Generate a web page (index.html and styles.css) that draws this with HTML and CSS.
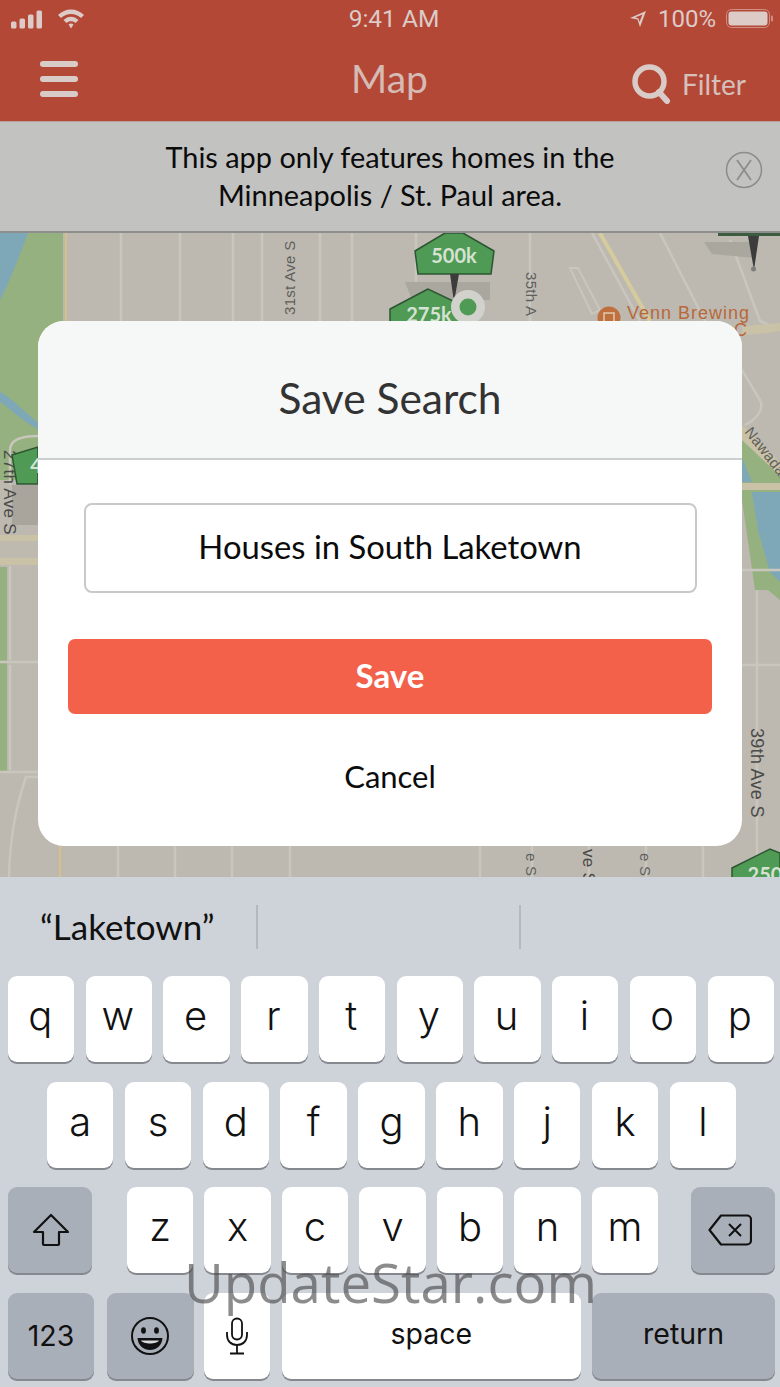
FILE: index.html
```html
<!DOCTYPE html>
<html lang="en">
<head>
    <meta charset="UTF-8">
    <meta name="viewport" content="width=device-width, initial-scale=1.0">
    <title>Save Search</title>
    <link rel="stylesheet" href="styles.css">
</head>
<body>
    <div class="app">
        <header class="topbar">
            <div class="status">
                <div class="status-left">
                    <svg width="74" height="26" viewBox="0 0 74 26">
                        <rect x="0" y="15.500" width="5.500" height="7" rx="1.500" fill="#dccbc7"/>
                        <rect x="8.500" y="12.500" width="5.500" height="10" rx="1.500" fill="#dccbc7"/>
                        <rect x="17" y="8.500" width="5.500" height="14" rx="1.500" fill="#dccbc7"/>
                        <rect x="25.500" y="4.500" width="5.500" height="18" rx="1.500" fill="#dccbc7"/>
                        <path d="M47 9 C54 1.500 66 1.500 73 9 L70 12 C64 6.500 56 6.500 50 12 Z M52.500 14 C57 9.500 63 9.500 67.500 14 L64.500 17 C62 14.500 58 14.500 55.500 17 Z M57.500 18.500 C59 17 61 17 62.500 18.500 L60 22.500 Z" fill="#dccbc7"/>
                    </svg>
                </div>
                <div class="status-time">9:41 AM</div>
                <div class="status-right">
                    <svg class="arrow" width="18" height="18" viewBox="0 0 18 18">
                        <path d="M17 1 L1 8 L8.500 9.500 L11 17 Z M13.500 4.500 L10.500 12 L9.500 8.500 L6 7.500 Z" fill="#dccbc7" fill-rule="evenodd"/>
                    </svg>
                    <span>100%</span>
                    <svg width="48" height="22" viewBox="0 0 48 22">
                        <rect x="0.500" y="1.500" width="43" height="18" rx="5" fill="none" stroke="#cf8f83" stroke-width="1"/>
                        <rect x="2.500" y="3.500" width="39" height="14" rx="3" fill="#dccbc7"/>
                        <rect x="45" y="7.500" width="2" height="6" rx="1" fill="#cf8f83"/>
                    </svg>
                </div>
            </div>
            <nav class="navbar">
                <div class="nav-left">
                    <div class="burger"><i></i><i></i><i></i></div>
                </div>
                <div class="nav-title">Map</div>
                <div class="nav-right">
                    <svg width="40" height="40" viewBox="0 0 40 40">
                        <circle cx="17.500" cy="17.500" r="14.500" fill="none" stroke="#d9cbc7" stroke-width="5.500"/>
                        <path d="M27 28 L35 37" stroke="#d9cbc7" stroke-width="6" stroke-linecap="round"/>
                    </svg>
                    <span>Filter</span>
                </div>
            </nav>
        </header>

        <section class="banner">
            <div></div>
            <p>This app only features homes in the<br>Minneapolis / St. Paul area.</p>
            <div class="banner-close">
                <svg width="38" height="38" viewBox="0 0 38 38">
                    <circle cx="19" cy="19" r="17.500" fill="none" stroke="#8c8c8a" stroke-width="1.500"/>
                    <path d="M12 9 L26 29 M26 9 L12 29" stroke="#8c8c8a" stroke-width="1.800"/>
                </svg>
            </div>
        </section>

        <main class="map">
            <svg class="map-art" width="780" height="644" viewBox="0 233 780 644">
                <rect x="0" y="233" width="780" height="644" fill="#bdb9b1"/>

                <!-- parks and water -->
                <path d="M0 233 H63 V400 C50 420 45 450 40 480 H0 Z" fill="#95b17f"/>
                <path d="M0 233 H28 C18 260 8 285 0 300 Z" fill="#7ea8b8"/>
                <path d="M0 392 C12 398 24 412 40 424 L40 430 C22 422 10 408 0 402 Z" fill="#7ea8b8"/>
                <rect x="0" y="567" width="7" height="205" fill="#95b17f"/>
                <path d="M742 430 L780 462 V600 L768 590 L755 590 L742 500 Z" fill="#95b17f"/>
                <path d="M742 458 L752 482 H742 Z M752 492 H780 V582 L770 572 L758 530 Z" fill="#7ea8b8"/>

                <!-- streets -->
                <g stroke="#c9c6be" stroke-width="2.500" fill="none">
                    <path d="M121 233 V321 M180 233 V321 M233 233 V321 M262 233 V321 M320 233 V321 M352 233 V321 M416 233 V300 M530 233 V321"/>
                    <path d="M118 846 V877 M175 846 V877 M232 846 V877 M290 846 V877 M480 846 V877 M532 846 V877 M589 846 V877 M646 846 V877 M703 846 V877"/>
                    <path d="M10 566 V660 M10 665 V770 M0 662 H38 M0 772 H38 M38 777 H26 C18 800 10 830 9 877"/>
                    <path d="M742 570 H780 M742 665 H780 M757 590 V877"/>
                    <path d="M592 233 L640 321 M660 233 L705 321 M730 240 L760 321 L780 330"/>
                    <path d="M10 485 V450 C10 440 20 436 38 436"/>
                    <path d="M742 370 L760 400 C765 410 755 420 745 425"/>
                </g>
                <path d="M600 233 L650 321" stroke="#d5cb9c" stroke-width="4" fill="none"/>
                <path d="M66 233 V321" stroke="#d5c08a" stroke-width="2" fill="none"/>
                <path d="M60 846 V877" stroke="#d5c08a" stroke-width="2" fill="none"/>
                <rect x="0" y="535" width="38" height="30" fill="#c9c2a7"/>
                <rect x="0" y="541" width="38" height="17" fill="#bfbab0"/>
                <rect x="742" y="483" width="38" height="7" fill="#c9c2a7"/>
                <path d="M742 425 L780 462 V476 L742 440 Z" fill="#c9c2a7"/>
                <path d="M742 327 C755 324 765 325 780 323 V331 C765 334 755 333 742 336 Z" fill="#c9c2a7"/>
                <path d="M570 268 L578 268 L600 310 L592 314 Z" fill="none" stroke="#c9c6be" stroke-width="2"/>
                <path d="M704 242 H750 L755 258 L712 254 Z" fill="#aaa79f"/>
                <path d="M405 282 H490 V300 H412 Z" fill="#aaa79f"/>
                <rect x="12" y="485" width="26" height="40" fill="#a9a59d"/>

                <!-- street names -->
                <g class="street" fill="#5f5f5d">
                    <text transform="translate(295 315) rotate(-90)">31st Ave S</text>
                    <text transform="translate(526 272) rotate(90)">35th A</text>
                    <text class="street-dark wide" transform="translate(751 728) rotate(90)">39th Ave S</text>
                    <text class="street-dark" transform="translate(4 450) rotate(90)">27th Ave S</text>
                    <text transform="translate(744 432) rotate(52)">Nawadan</text>
                    <text transform="translate(526 853) rotate(90)">e S</text>
                    <text class="street-dark" transform="translate(583 849) rotate(90)">ve S</text>
                    <text transform="translate(640 853) rotate(90)">e S</text>
                </g>

                <!-- Venn Brewing -->
                <circle cx="609" cy="318" r="11.500" fill="#c0703f"/>
                <rect x="604" y="313" width="10" height="10" fill="none" stroke="#e0c9b0" stroke-width="1.500"/>
                <text class="poi" x="627" y="319">Venn Brewing</text>
                <text class="poi" x="734" y="336">C</text>

                <!-- price pins -->
                <g class="pin">
                    <path d="M445 233 H463 L494 251 L491 274 H418 L415 251 Z" fill="#4f9a55" stroke="#2d5532" stroke-width="1.500"/>
                    <path d="M450 274 H459 L454 302 Z" fill="#3c3c3c"/>
                    <text x="454" y="263">500k</text>

                    <path d="M428 289 L390 309 V330 H470 V309 Z" fill="#4f9a55" stroke="#2d5532" stroke-width="1.500"/>
                    <text x="429" y="322">275k</text>

                    <circle cx="468" cy="307" r="17" fill="#d2d2cc"/>
                    <circle cx="468" cy="307" r="8.500" fill="#4f9a55"/>

                    <path d="M718 233 H780 V236 H718 Z" fill="#3c5c42"/>
                    <path d="M748 236 H759 L754 270 Z" fill="#3c3c3c"/>
                    <circle cx="753.500" cy="269" r="2.500" fill="#7e7e7c"/>

                    <path d="M732 868 L770 849 L780 853 V880 H732 Z" fill="#4f9a55" stroke="#2d5532" stroke-width="1.500"/>
                    <text x="765" y="882">250</text>

                    <path d="M12 455 L38 447 V484 H17 Z" fill="#4f9a55" stroke="#2d5532" stroke-width="1.500"/>
                    <text x="36" y="473">4</text>
                </g>
            </svg>

            <form class="modal">
                <h2 class="modal-title">Save Search</h2>
                <div class="modal-body">
                    <div class="search-name">Houses in South Laketown</div>
                    <button type="button" class="save-btn">Save</button>
                    <button type="button" class="cancel-btn">Cancel</button>
                </div>
            </form>
        </main>

        <section class="keyboard">
            <div class="suggestions">
                <div class="suggestion">“Laketown”</div>
                <div class="suggestion"></div>
                <div class="suggestion"></div>
            </div>
            <div class="key-row row-one">
                <div class="key">q</div><div class="key">w</div><div class="key">e</div><div class="key">r</div><div class="key">t</div><div class="key">y</div><div class="key">u</div><div class="key">i</div><div class="key">o</div><div class="key">p</div>
            </div>
            <div class="key-row row-two">
                <div class="key">a</div><div class="key">s</div><div class="key">d</div><div class="key">f</div><div class="key">g</div><div class="key">h</div><div class="key">j</div><div class="key">k</div><div class="key">l</div>
            </div>
            <div class="key-row row-three">
                <div class="key dark shift">
                    <svg width="38" height="34" viewBox="0 0 38 34">
                        <path d="M19 2 L36 19 H27 V31 a1 1 0 0 1 -1 1 H12 a1 1 0 0 1 -1 -1 V19 H2 Z" fill="none" stroke="#111" stroke-width="2.200" stroke-linejoin="round"/>
                    </svg>
                </div>
                <div class="letters">
                    <div class="key">z</div><div class="key">x</div><div class="key">c</div><div class="key">v</div><div class="key">b</div><div class="key">n</div><div class="key">m</div>
                </div>
                <div class="key dark shift del">
                    <svg width="44" height="32" viewBox="0 0 44 32">
                        <path d="M13 1.500 H39 a4 4 0 0 1 4 4 V26.500 a4 4 0 0 1 -4 4 H13 L1.500 16 Z" fill="none" stroke="#111" stroke-width="2.200" stroke-linejoin="round"/>
                        <path d="M21 10 L33 22 M33 10 L21 22" stroke="#111" stroke-width="2"/>
                    </svg>
                </div>
            </div>
            <div class="key-row row-four">
                <div class="key dark small num">123</div>
                <div class="key dark emoji">
                    <svg width="40" height="40" viewBox="0 0 40 40">
                        <circle cx="20" cy="20" r="18" fill="none" stroke="#111" stroke-width="2"/>
                        <ellipse cx="13.500" cy="14.500" rx="2.400" ry="3.300" fill="#111"/>
                        <ellipse cx="26.500" cy="14.500" rx="2.400" ry="3.300" fill="#111"/>
                        <path d="M7.500 22 H32.500 C32 30 26 34 20 34 C14 34 8 30 7.500 22 Z" fill="#111"/>
                        <path d="M11 24.500 H29 C28 26.500 24 27.500 20 27.500 C16 27.500 12 26.500 11 24.500 Z" fill="#d8dade"/>
                    </svg>
                </div>
                <div class="key mic">
                    <svg width="24" height="38" viewBox="0 0 24 38">
                        <rect x="7" y="1.500" width="10" height="21" rx="5" fill="none" stroke="#111" stroke-width="1.800"/>
                        <path d="M2 15 V18 C2 24 6 28 12 28 C18 28 22 24 22 18 V15 M12 28 V36 M5 36.500 H19" fill="none" stroke="#111" stroke-width="1.800"/>
                    </svg>
                </div>
                <div class="key small space">space</div>
                <div class="key dark small return">return</div>
            </div>
        </section>

        <div class="watermark">UpdateStar.com</div>
    </div>
</body>
</html>
```

FILE: styles.css
```css
* {
    box-sizing: border-box;
}

html, body {
    margin: 0;
    padding: 0;
}

body {
    width: 780px;
    height: 1387px;
    overflow: hidden;
    font-family: Lato, 'Noto Sans', sans-serif;
}

.app {
    position: relative;
    display: flex;
    flex-direction: column;
    width: 780px;
    height: 1387px;
}

/* top red bar */
.topbar {
    height: 121px;
    background-color: #b44837;
    color: #dccbc7;
}

.status {
    display: grid;
    grid-template-columns: 1fr auto 1fr;
    align-items: center;
    height: 40px;
    padding: 0 6px 3px 11px;
    font-family: Roboto, sans-serif;
    font-size: 24.500px;
}

.status-left {
    display: flex;
    align-items: center;
}

.status-time {
    padding-left: 3px;
    color: #dccbc7;
}

.status-right {
    display: flex;
    align-items: center;
    justify-content: flex-end;
    gap: 10px;
    font-size: 24px;
}

.arrow {
    margin-right: 1px;
}

.navbar {
    display: grid;
    grid-template-columns: 1fr auto 1fr;
    align-items: center;
    height: 81px;
    padding: 0 34px 0 40px;
}

.nav-left {
    padding-bottom: 4px;
}

.burger {
    display: flex;
    flex-direction: column;
    gap: 9px;
    width: 38px;
}

.burger i {
    display: block;
    height: 6px;
    border-radius: 3px;
    background-color: #d9cbc7;
}

.nav-title {
    padding: 0 7px 6px 0;
    font-size: 39px;
    color: #d6bbb4;
}

.nav-right {
    display: flex;
    align-items: center;
    justify-content: flex-end;
    gap: 10px;
    padding-top: 7px;
    font-size: 28px;
    color: #d6c0ba;
}

/* notice under the bar */
.banner {
    display: grid;
    grid-template-columns: 1fr auto 1fr;
    align-items: center;
    height: 112px;
    background-color: #c2c2c0;
    border-top: 1px solid #b5a09b;
    border-bottom: 2px solid #8e8e8c;
}

.banner p {
    margin: 0;
    padding-bottom: 2px;
    font-size: 28.900px;
    line-height: 38px;
    text-align: center;
    white-space: nowrap;
    color: #0b0b0b;
}

.banner-close {
    display: flex;
    justify-content: flex-end;
    padding: 0 17px 14px 0;
}

/* map */
.map {
    position: relative;
    height: 644px;
    overflow: hidden;
}

.map-art {
    display: block;
}

.street text {
    font-family: 'Liberation Sans', sans-serif;
    font-size: 15px;
    letter-spacing: 0.300px;
}

.street .street-dark {
    font-size: 17px;
    fill: #4a4a48;
}

.street .wide {
    font-size: 18px;
}

.poi {
    font-family: 'Liberation Sans', sans-serif;
    font-size: 18px;
    letter-spacing: 1px;
    fill: #b8683a;
}

.pin text {
    font-family: Lato, sans-serif;
    font-size: 20px;
    font-weight: 700;
    text-anchor: middle;
    fill: #d6e2d2;
}

.modal {
    position: absolute;
    top: 88px;
    left: 38px;
    width: 704px;
    height: 525px;
    border-radius: 26px;
    background-color: #fff;
    overflow: hidden;
}

.modal-title {
    display: flex;
    align-items: center;
    justify-content: center;
    height: 139px;
    margin: 0;
    padding-top: 15px;
    background-color: #f6f7f7;
    border-bottom: 2px solid #cdcfcf;
    font-size: 42.500px;
    font-weight: 400;
    color: #333;
}

.modal-body {
    display: flex;
    flex-direction: column;
    align-items: center;
    padding-top: 43px;
}

.search-name {
    display: flex;
    align-items: center;
    justify-content: center;
    width: 613px;
    height: 90px;
    padding-bottom: 4px;
    border: 2px solid #c9c9c9;
    border-radius: 8px;
    font-size: 32.800px;
    color: #0b0b0b;
}

.save-btn {
    width: 644px;
    height: 75px;
    margin-top: 46px;
    padding: 0 0 4px;
    border: none;
    border-radius: 7px;
    background-color: #f3614b;
    font-family: inherit;
    font-size: 33px;
    font-weight: 700;
    color: #fff;
}

.cancel-btn {
    height: 40px;
    margin-top: 42px;
    padding: 0;
    border: none;
    background: none;
    font-family: inherit;
    font-size: 31px;
    color: #0b0b0b;
}

/* keyboard */
.keyboard {
    flex: 1;
    background-color: #ced2d9;
}

.suggestions {
    display: grid;
    grid-template-columns: 258px 263px 1fr;
    align-items: center;
    height: 99px;
}

.suggestion {
    height: 44px;
    padding-left: 40px;
    border-right: 2px solid #b4b8bf;
    font-size: 35px;
    line-height: 42px;
    color: #111;
}

.suggestion:last-child {
    border-right: none;
}

.key-row {
    display: flex;
    gap: 11.400px;
    height: 86px;
}

.row-one {
    padding: 0 6px 0 8px;
}

.row-two {
    margin-top: 20px;
    padding: 0 44px 0 47px;
}

.row-three {
    justify-content: space-between;
    margin-top: 19px;
    padding: 0 5px 0 8px;
}

.row-four {
    margin-top: 20px;
    padding: 0 5px 0 8px;
}

.key {
    display: flex;
    flex: 1;
    align-items: center;
    justify-content: center;
    padding: 0 2px 8px 0;
    border-radius: 9px;
    background-color: #fff;
    box-shadow: 0 2px 0 #85888e;
    font-family: Inter, sans-serif;
    font-size: 40px;
    font-weight: 300;
    color: #111;
}

.row-two .key {
    padding-right: 0;
}

.key.dark {
    background-color: #a9afb9;
}

.key.small {
    padding: 0 0 5px;
    font-size: 28.500px;
    font-weight: 400;
}

.key.num {
    padding-bottom: 2px;
}

.letters {
    display: flex;
    gap: 11.400px;
    width: 531px;
    margin-left: 2px;
}

.letters .key {
    padding-right: 0;
}

.shift {
    flex: 0 0 84px;
    padding: 0 0 0 2px;
}

.del {
    padding: 0 6px 0 0;
}

.num {
    flex: 0 0 86px;
}

.emoji {
    flex: 0 0 87px;
    margin-left: 1.600px;
    padding: 0;
}

.mic {
    flex: 0 0 66px;
    margin-left: -1px;
    padding: 0;
}

.space {
    flex: 0 0 299px;
}

.return {
    flex: 1;
}

.watermark {
    position: absolute;
    top: 1245px;
    left: 184px;
    font-family: 'Open Sans', sans-serif;
    font-size: 54.600px;
    font-weight: 400;
    color: rgba(70, 70, 70, 0.62);
}
```
